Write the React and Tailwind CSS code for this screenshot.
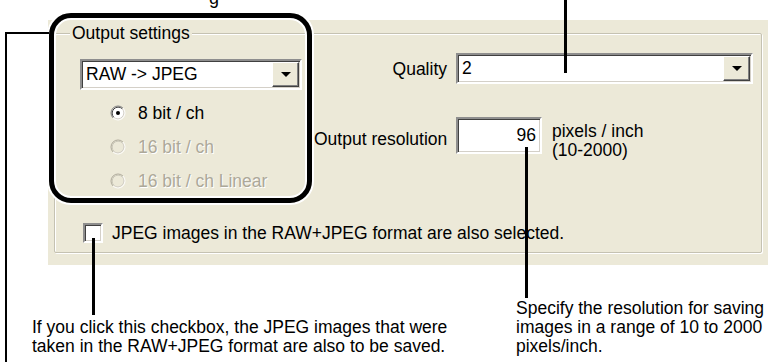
import React from 'react';

const Arrow = () => (
  <svg width="10" height="5" viewBox="0 0 10 5">
    <path d="M0 0h10L5 5z" fill="#000" />
  </svg>
);

// sunken combo box with the classic raised arrow button
const Combo = ({ value, className }) => (
  <div className={`flex h-[31px] bg-white border-2 border-t-[#8E8E8E] border-l-[#8E8E8E] border-b-white border-r-white shadow-[inset_1px_1px_0_#404040,inset_-1px_-1px_0_#D4D0C8] ${className}`}>
    <span className="flex-1 pl-[4px] leading-[27px]">{value}</span>
    <span className="w-[27px] my-[1px] mr-[1px] flex items-center justify-center bg-[#ECE9D8] border border-t-white border-l-white border-b-[#404040] border-r-[#404040] shadow-[inset_-1px_-1px_0_#808080]">
      <Arrow />
    </span>
  </div>
);

const Radio = ({ checked, disabled, label }) => (
  <div className="flex h-[34px] items-center gap-[12px] pl-[30px]">
    <svg width="16" height="16" viewBox="0 0 16 16">
      <circle cx="8" cy="8" r="6.5" fill={disabled ? '#ECE9D8' : '#fff'} />
      <path d="M3.05 12.95A7 7 0 0 1 12.95 3.05" stroke={disabled ? '#ACA899' : '#808080'} fill="none" />
      <path d="M12.95 3.05A7 7 0 0 1 3.05 12.95" stroke="#fff" fill="none" />
      <path d="M3.76 12.24A6 6 0 0 1 12.24 3.76" stroke={disabled ? '#C9C6B8' : '#404040'} fill="none" />
      <path d="M12.24 3.76A6 6 0 0 1 3.76 12.24" stroke="#D4D0C8" fill="none" />
      {checked && <circle cx="8" cy="8" r="2" fill="#000" />}
    </svg>
    <span className={disabled ? 'text-[#ACA899] [text-shadow:1px_1px_0_#fff]' : 'text-black'}>{label}</span>
  </div>
);

export default function App() {
  return (
    <div className="relative w-[768px] h-[362px] overflow-hidden bg-white text-black font-['Liberation_Sans',Arial,sans-serif]">
      {/* dialog panel */}
      <div className="ml-[48px] mt-[20px] h-[245px] bg-[#ECE9D8] pt-[13px] pl-[6px] pr-[6px] pb-[12px] text-[17.5px]">
        <div className="relative h-full border border-[#C5C2B2] shadow-[inset_1px_1px_0_#fff,1px_1px_0_#fff] rounded-[2px] pt-[19px] pl-[25px] pr-[8px]">
          <span className="absolute left-[15px] top-[-11px] bg-[#ECE9D8] px-[2px] leading-[20px]">Output settings</span>

          <div className="flex items-start">
            {/* left column */}
            <div className="w-[222px] mt-[6px]">
              <Combo value="RAW -> JPEG" />
              <div className="mt-[6px]">
                <Radio checked label="8 bit / ch" />
                <Radio disabled label="16 bit / ch" />
                <Radio disabled label="16 bit / ch Linear" />
              </div>
            </div>

            {/* right column */}
            <div className="flex-1 ml-[12px] grid grid-cols-[133px_1fr] gap-x-[9px] items-center">
              <span className="text-right leading-[20px]">Quality</span>
              <Combo value="2" />

              <span className="mt-[33px] text-right leading-[20px] whitespace-nowrap">Output resolution</span>
              <div className="mt-[33px] flex items-start gap-[10px]">
                <div className="w-[86px] h-[37px] bg-white border-2 border-t-[#8E8E8E] border-l-[#8E8E8E] border-b-white border-r-white shadow-[inset_1px_1px_0_#404040,inset_-1px_-1px_0_#D4D0C8] text-right pr-[4px] pt-[6px] leading-[20px]">
                  96
                </div>
                <div className="leading-[19px] pt-[5px]">
                  pixels / inch
                  <br />
                  (10-2000)
                </div>
              </div>
            </div>
          </div>

          {/* checkbox row */}
          <div className="mt-[24px] ml-[3px] flex items-center h-[22px] gap-[9px]">
            <span className="w-[20px] h-[20px] bg-white border-2 border-t-[#8E8E8E] border-l-[#8E8E8E] border-b-white border-r-white shadow-[inset_1px_1px_0_#404040,inset_-1px_-1px_0_#D4D0C8]" />
            <span className="leading-[20px]">JPEG images in the RAW+JPEG format are also selected.</span>
          </div>
        </div>
      </div>

      {/* captions below the dialog */}
      <div className="flex text-[17.5px] leading-[19px] whitespace-nowrap">
        <div className="w-[516px] pl-[32px] pt-[53px]">
          If you click this checkbox, the JPEG images that were
          <br />
          taken in the RAW+JPEG format are also to be saved.
        </div>
        <div className="pt-[34px]">
          Specify the resolution for saving
          <br />
          images in a range of 10 to 2000
          <br />
          pixels/inch.
        </div>
      </div>

      {/* cut-off caption above */}
      <span className="absolute left-[209px] top-[-11px] text-[18px] leading-[18px]">g</span>

      {/* callout frame and leader lines */}
      <div className="absolute left-[49px] top-[13px] w-[263px] h-[190px] border-[5px] border-black rounded-[22px] shadow-[0_0_0_2px_#fff,inset_0_0_0_2px_#fff]" />
      <div className="absolute left-[5px] top-[32px] w-[44px] h-[2px] bg-black" />
      <div className="absolute left-[5px] top-[32px] w-[2px] h-[330px] bg-black" />
      <div className="absolute left-[564px] top-0 w-[3px] h-[73px] bg-black" />
      <div className="absolute left-[525px] top-[147px] w-[3px] h-[151px] bg-black" />
      <div className="absolute left-[92px] top-[238px] w-[3px] h-[77px] bg-black" />
    </div>
  );
}
